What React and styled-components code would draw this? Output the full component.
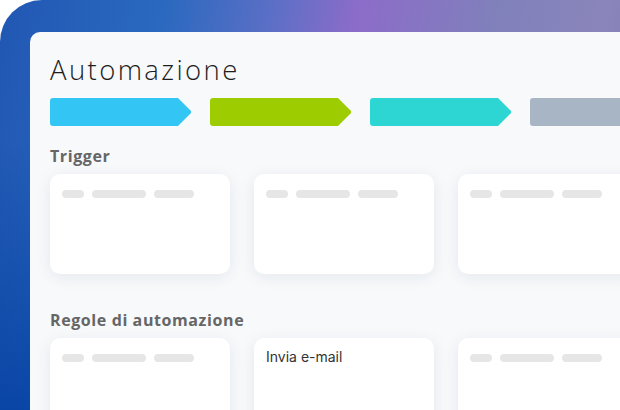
import React from "react";
import styled, { createGlobalStyle } from "styled-components";

const GlobalStyle = createGlobalStyle`
  html, body {
    margin: 0;
    padding: 0;
    background: #ffffff;
  }
  body {
    font-family: "Open Sans", "Liberation Sans", sans-serif;
  }
`;

const tags = ["#33c5f3", "#9dcd00", "#2dd6d3", "#a8b5c5"];

const App = () => {
  return (
    <>
      <GlobalStyle />
      <Frame>
        <Panel>
          <Title>Automazione</Title>
          <TagRow>
            {tags.map((c) => (
              <Tag key={c} color={c} />
            ))}
          </TagRow>

          <SectionLabel>Trigger</SectionLabel>
          <CardRow>
            <Card>
              <Skeleton />
            </Card>
            <Card>
              <Skeleton />
            </Card>
            <Card>
              <Skeleton />
            </Card>
          </CardRow>

          <SectionLabel spaced>Regole di automazione</SectionLabel>
          <CardRow>
            <Card>
              <Skeleton />
            </Card>
            <Card>
              <CardText>Invia e-mail</CardText>
            </Card>
            <Card>
              <Skeleton />
            </Card>
          </CardRow>
        </Panel>
      </Frame>
    </>
  );
};

const Skeleton = () => (
  <PillRow>
    <Pill w={22} />
    <Pill w={54} />
    <Pill w={40} />
  </PillRow>
);

export default App;

const Frame = styled.div`
  width: 620px;
  height: 410px;
  box-sizing: border-box;
  padding: 32px 0 0 30px;
  display: flex;
  overflow: hidden;
  border-top-left-radius: 42px;
  background:
    linear-gradient(148deg, transparent 62%, rgba(255, 255, 255, 0.08) 62.2%, transparent 75%),
    linear-gradient(to bottom, rgba(8, 66, 162, 0) 35%, rgba(8, 68, 164, 0.95) 100%),
    linear-gradient(100deg, #2157b3 0%, #2a69bf 24%, #5d6fc6 40%, #8c6cc9 52%, #8080bb 72%, #8a86bb 88%, #7f7ab8 100%);
`;

const Panel = styled.div`
  flex: 1;
  min-width: 0;
  background: #f7f9fb;
  border-top-left-radius: 10px;
  padding: 20px 0 0 20px;
  overflow: hidden;
`;

const Title = styled.h1`
  margin: 0;
  font-family: "Open Sans", "Liberation Sans", sans-serif;
  font-size: 27.5px;
  line-height: 36px;
  font-weight: 300;
  color: #1e1e1e;
  letter-spacing: 2.4px;
`;

const TagRow = styled.div`
  display: flex;
  gap: 18px;
  margin-top: 10px;
`;

const Tag = styled.div`
  flex: 0 0 142px;
  height: 28px;
  background: ${(p) => p.color};
  border-radius: 3px;
  clip-path: polygon(0 0, 128px 0, 141px 13px, 141px 15px, 128px 28px, 0 28px);
`;

const SectionLabel = styled.div`
  margin-top: ${(p) => (p.spaced ? "36px" : "20px")};
  font-family: "Open Sans", "Liberation Sans", sans-serif;
  font-size: 16px;
  line-height: 20px;
  font-weight: 700;
  color: #666;
  letter-spacing: 0.6px;
`;

const CardRow = styled.div`
  display: flex;
  gap: 24px;
  margin-top: 8px;
`;

const Card = styled.div`
  flex: 0 0 180px;
  height: 100px;
  box-sizing: border-box;
  padding: 16px 12px;
  background: #fff;
  border-radius: 10px;
  box-shadow: 0 3px 16px rgba(30, 40, 60, 0.08);
`;

const PillRow = styled.div`
  display: flex;
  gap: 8px;
`;

const Pill = styled.span`
  width: ${(p) => p.w}px;
  height: 8px;
  border-radius: 4px;
  background: #e6e6e6;
`;

const CardText = styled.div`
  margin-top: -6px;
  font-family: Inter, Roboto, sans-serif;
  font-size: 14px;
  line-height: 18px;
  color: #333;
`;
